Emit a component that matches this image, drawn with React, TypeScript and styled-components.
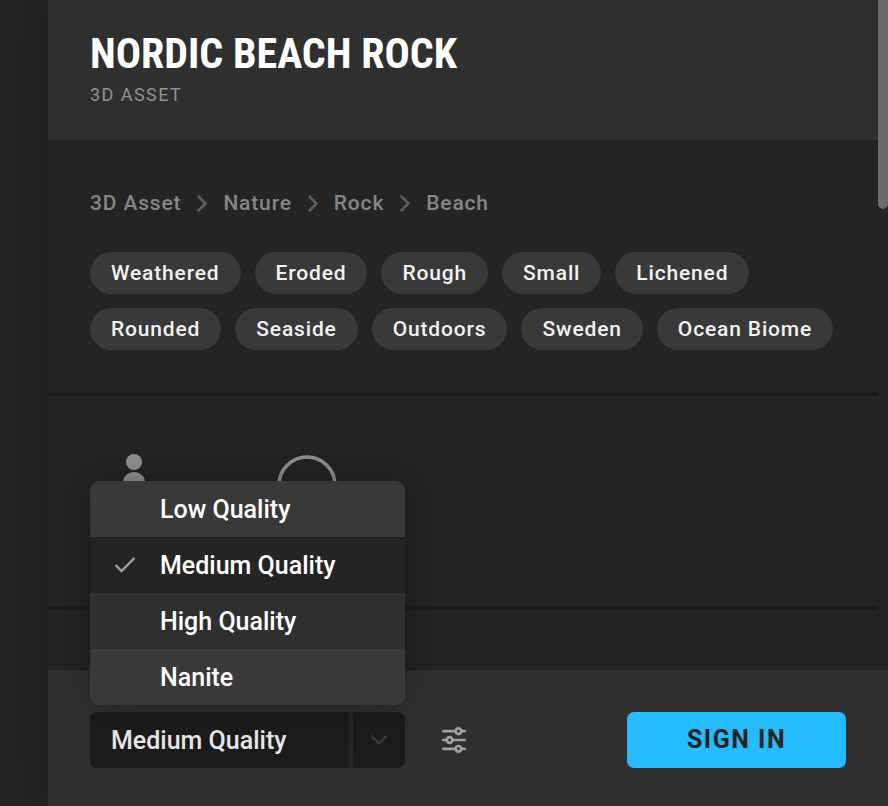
import React, { useState } from "react";
import styled, { createGlobalStyle } from "styled-components";

const GlobalStyle = createGlobalStyle`
  *, *::before, *::after { box-sizing: border-box; }
  body {
    margin: 0;
    background: #242424;
    color: #fff;
    font-family: Roboto, "Liberation Sans", sans-serif;
  }
  button, select { font: inherit; color: inherit; border: 0; cursor: pointer; }
`;

const Page = styled.div`
  display: flex;
  height: 100vh;
  padding-left: 48px;
  overflow: hidden;
`;

const Panel = styled.main`
  flex: 1;
  min-width: 0;
  display: flex;
  flex-direction: column;
  background: #242424;
  box-shadow: 0 0 42px rgba(0, 0, 0, 0.25);
`;

const ScrollArea = styled.div`
  flex: 1;
  min-height: 0;
  display: flex;
`;

const Content = styled.div`
  flex: 1;
  min-width: 0;
  overflow: hidden;
`;

const ScrollTrack = styled.div`
  flex: 0 0 10px;
  background: #242424;
`;

const ScrollThumb = styled.div`
  height: 209px;
  background: #6a6a6a;
  border-radius: 0 0 5px 5px;
`;

const Header = styled.header`
  padding: 29px 42px 33px;
  background: #2f2f2f;
`;

const Title = styled.h1`
  margin: 0;
  font-family: "Roboto Condensed", Roboto, sans-serif;
  font-size: 42px;
  line-height: 50px;
  font-weight: 700;
  text-transform: uppercase;
`;

const Subtitle = styled.p`
  margin: 4px 0 0;
  color: #929292;
  font-size: 18px;
  line-height: 24px;
  letter-spacing: 0.08em;
  text-transform: uppercase;
`;

const Section = styled.section`
  padding: 42px;
  border-bottom: 4px solid #1b1b1b;
  &:last-child { border-bottom: 0; }
`;

const Breadcrumbs = styled.nav`
  display: flex;
  align-items: center;
  gap: 14px;
  height: 42px;
  color: #5e5e5e;
`;

const Crumb = styled.a`
  color: #868686;
  font-size: 21px;
  line-height: 28px;
  font-weight: 500;
  letter-spacing: 0.04em;
  text-decoration: none;
`;

const Tags = styled.div`
  display: flex;
  flex-wrap: wrap;
  gap: 14px;
  margin-top: 28px;
`;

const Tag = styled.a`
  padding: 0 21px;
  border-radius: 21px;
  background: #393939;
  color: #f2f2f2;
  font-size: 21px;
  line-height: 42px;
  font-weight: 500;
  letter-spacing: 0.04em;
  text-decoration: none;
`;

const Specs = styled.div`
  display: flex;
  gap: 85px;
  height: 126px;
  color: #919191;
`;

const SpecIcon = styled.svg`
  width: 88px;
  height: 88px;
`;

const Footer = styled.footer`
  display: flex;
  align-items: center;
  gap: 35px;
  padding: 42px 42px 38px;
  background: #2f2f2f;
`;

const Picker = styled.div`
  position: relative;
  flex: 0 1 315px;
  display: flex;
  gap: 4px;
  height: 56px;
  border-radius: 7px;
  background: #262626;
`;

const QualitySelect = styled.select`
  flex: 1;
  min-width: 0;
  padding: 0 21px;
  appearance: none;
  border-radius: 7px 0 0 7px;
  background: #1b1b1b;
  color: #e8e8e8;
  font-size: 25px;
  font-weight: 500;
`;

const PickerToggle = styled.button`
  flex: 0 0 52px;
  display: grid;
  place-items: center;
  padding: 0;
  border-radius: 0 7px 7px 0;
  background: #1b1b1b;
  color: #3c3c3c;
`;

const Menu = styled.div`
  position: absolute;
  left: 0;
  right: 0;
  bottom: calc(100% + 7px);
  overflow: hidden;
  border-radius: 10px;
  background: #393939;
`;

const MenuShadow = styled.div`
  position: absolute;
  inset: auto 0 calc(100% + 7px);
  height: 224px;
  border-radius: 10px;
  box-shadow: 0 0 42px rgba(0, 0, 0, 0.3);
`;

const MenuItem = styled.button<{ $tone: string }>`
  display: grid;
  grid-template-columns: 70px 1fr;
  align-items: center;
  width: 100%;
  height: 56px;
  padding: 0;
  background: ${(p) => p.$tone};
  font-size: 25px;
  font-weight: 500;
  text-align: left;
`;

const CheckSlot = styled.span`
  display: grid;
  place-items: center;
  color: #a0a0a0;
`;

const SettingsButton = styled.button`
  display: grid;
  place-items: center;
  padding: 0;
  background: none;
  color: #a0a0a0;
`;

const SignIn = styled.button`
  flex: 0 1 219px;
  height: 56px;
  margin-left: auto;
  padding: 0 0 2px;
  border-radius: 7px;
  background: #26bbff;
  color: #242424;
  font-size: 25px;
  font-weight: 700;
  letter-spacing: 0.06em;
  text-transform: uppercase;
`;

const crumbs = ["3D Asset", "Nature", "Rock", "Beach"];
const tags = [
  "Weathered", "Eroded", "Rough", "Small", "Lichened",
  "Rounded", "Seaside", "Outdoors", "Sweden", "Ocean Biome",
];
const qualities = [
  { name: "Low Quality", tone: "#393939" },
  { name: "Medium Quality", tone: "#242424" },
  { name: "High Quality", tone: "#2f2f2f" },
  { name: "Nanite", tone: "#393939" },
];

const CrumbArrow = () => (
  <svg width="14" height="20" viewBox="0 0 14 20" fill="none" stroke="currentColor" strokeWidth="2.5" strokeLinecap="round" aria-hidden="true">
    <path d="M3.5 3.5 10.5 10.5 3.5 17.5" />
  </svg>
);

const Chevron = () => (
  <svg width="20" height="14" viewBox="0 0 20 14" fill="none" stroke="currentColor" strokeWidth="2.5" strokeLinecap="round" aria-hidden="true">
    <path d="M3 3.5 10 10.5 17 3.5" />
  </svg>
);

const Check = () => (
  <svg width="22" height="18" viewBox="0 0 22 18" fill="none" stroke="currentColor" strokeWidth="2.4" aria-hidden="true">
    <path d="M1.5 9 7.5 15 20.5 2" />
  </svg>
);

const Sliders = () => (
  <svg width="28" height="28" viewBox="0 0 28 28" fill="none" stroke="currentColor" strokeWidth="2.7" strokeLinecap="round" aria-hidden="true">
    <path d="M3.3 5.2H15.6M21.4 5.2H24.7M3.3 14H6.6M12.6 14H24.7M3.3 22.8H15.6M21.4 22.8H24.7" />
    <circle cx="18.4" cy="5.2" r="2.8" />
    <circle cx="9.6" cy="14" r="2.8" />
    <circle cx="18.4" cy="22.8" r="2.8" />
  </svg>
);

export default function App() {
  const [quality, setQuality] = useState("Medium Quality");
  const [open, setOpen] = useState(true);

  return (
    <>
      <GlobalStyle />
      <Page>
        <Panel>
          <ScrollArea>
            <Content>
              <Header>
                <Title>Nordic Beach Rock</Title>
                <Subtitle>3D Asset</Subtitle>
              </Header>
              <Section>
                <Breadcrumbs aria-label="Category">
                  {crumbs.map((crumb, i) => (
                    <React.Fragment key={crumb}>
                      {i > 0 && <CrumbArrow />}
                      <Crumb href="#">{crumb}</Crumb>
                    </React.Fragment>
                  ))}
                </Breadcrumbs>
                <Tags>
                  {tags.map((tag) => (
                    <Tag href="#" key={tag}>{tag}</Tag>
                  ))}
                </Tags>
              </Section>
              <Section>
                <Specs>
                  <SpecIcon viewBox="0 0 88 88" aria-hidden="true">
                    <circle cx="44" cy="24" r="8" fill="currentColor" />
                    <path d="M33 45C33 38 38 34 44 34S55 38 55 45V60H33Z" fill="currentColor" />
                  </SpecIcon>
                  <SpecIcon viewBox="0 0 88 88" aria-hidden="true">
                    <circle cx="44" cy="47" r="28" fill="none" stroke="currentColor" strokeWidth="3.6" />
                  </SpecIcon>
                </Specs>
              </Section>
              <Section />
            </Content>
            <ScrollTrack>
              <ScrollThumb />
            </ScrollTrack>
          </ScrollArea>
          <Footer>
            <Picker>
              <QualitySelect
                aria-label="Quality"
                value={quality}
                onChange={(e) => setQuality(e.target.value)}
              >
                {qualities.map((q) => (
                  <option key={q.name}>{q.name}</option>
                ))}
              </QualitySelect>
              <PickerToggle aria-label="Toggle quality menu" aria-expanded={open} onClick={() => setOpen(!open)}>
                <Chevron />
              </PickerToggle>
              {open && (
                <>
                  <MenuShadow />
                  <Menu role="listbox" aria-label="Quality options">
                    {qualities.map((q) => (
                      <MenuItem
                        key={q.name}
                        role="option"
                        aria-selected={q.name === quality}
                        $tone={q.tone}
                        onClick={() => setQuality(q.name)}
                      >
                        <CheckSlot>{q.name === quality && <Check />}</CheckSlot>
                        {q.name}
                      </MenuItem>
                    ))}
                  </Menu>
                </>
              )}
            </Picker>
            <SettingsButton aria-label="Download settings">
              <Sliders />
            </SettingsButton>
            <SignIn>Sign in</SignIn>
          </Footer>
        </Panel>
      </Page>
    </>
  );
}
